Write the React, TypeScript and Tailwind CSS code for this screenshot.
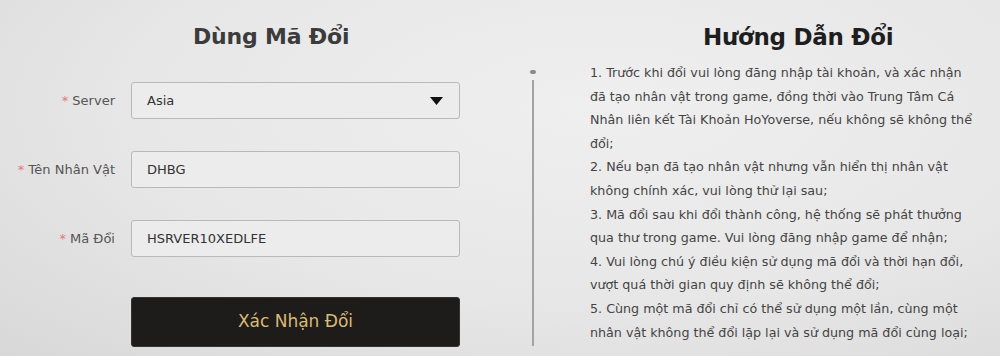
import React from 'react'

const guide: string[][] = [
  [
    '1. Trước khi đổi vui lòng đăng nhập tài khoản, và xác nhận',
    'đã tạo nhân vật trong game, đồng thời vào Trung Tâm Cá',
    'Nhân liên kết Tài Khoản HoYoverse, nếu không sẽ không thể',
    'đổi;'
  ],
  ['2. Nếu bạn đã tạo nhân vật nhưng vẫn hiển thị nhân vật', 'không chính xác, vui lòng thử lại sau;'],
  [
    '3. Mã đổi sau khi đổi thành công, hệ thống sẽ phát thưởng',
    'qua thư trong game. Vui lòng đăng nhập game để nhận;'
  ],
  [
    '4. Vui lòng chú ý điều kiện sử dụng mã đổi và thời hạn đổi,',
    'vượt quá thời gian quy định sẽ không thể đổi;'
  ],
  [
    '5. Cùng một mã đổi chỉ có thể sử dụng một lần, cùng một',
    'nhân vật không thể đổi lặp lại và sử dụng mã đổi cùng loại;'
  ]
]

const Field: React.FC<{ label: string; value: string; select?: boolean }> = ({ label, value, select }) => (
  <div className="flex items-center">
    <div className="w-[115px] text-right text-[13px] text-[#555] whitespace-nowrap">
      <span className="text-[#e07a7a] mr-1">*</span>
      {label}
    </div>
    <div className="ml-4 w-[329px] h-[37px] flex items-center justify-between pl-[15px] pr-4 bg-[#ececec] border border-[#b9b9b9] rounded-[3px] text-[13px] text-[#333]">
      <span>{value}</span>
      {select && (
        <svg width="13" height="8" viewBox="0 0 13 8">
          <path d="M0 0 H13 L6.5 8 Z" fill="#111" />
        </svg>
      )}
    </div>
  </div>
)

export default function App() {
  return (
    <div
      className="w-[1000px] h-[356px] overflow-hidden flex bg-[radial-gradient(ellipse_at_60%_30%,#efefef_0%,#e7e7e7_55%,#d8d8d8_100%)]"
      style={{ fontFamily: '"DejaVu Sans", Verdana, sans-serif' }}
    >
      {/* cột trái: form đổi mã */}
      <div className="w-[531px] shrink-0 flex flex-col">
        <h1 className="mt-[22px] ml-[193px] text-[22px] leading-[30px] font-bold text-[#3b3b3b] tracking-[-0.2px]">
          Dùng Mã Đổi
        </h1>
        <div className="mt-[30px] flex flex-col gap-8">
          <Field label="Server" value="Asia" select />
          <Field label="Tên Nhân Vật" value="DHBG" />
          <Field label="Mã Đổi" value="HSRVER10XEDLFE" />
        </div>
        <button className="mt-10 ml-[131px] w-[329px] h-[50px] bg-[#1d1c1b] border border-[#333] rounded-[3px] text-[17px] text-[#dcb974]">
          Xác Nhận Đổi
        </button>
      </div>

      {/* đường chia */}
      <div className="w-1 shrink-0 flex flex-col items-center pt-[70px]">
        <div className="w-[6px] h-[4px] rounded-full bg-[#8a8a8a]" />
        <div className="mt-[6px] w-[2px] h-[266px] bg-[#a3a3a3]" />
      </div>

      {/* cột phải: hướng dẫn */}
      <div className="flex-1 pl-[55px] pr-4">
        <h2 className="mt-[22px] ml-[113px] text-[23px] leading-[30px] font-bold text-[#1e1e1e] tracking-[-0.3px]">
          Hướng Dẫn Đổi
        </h2>
        <div className="mt-[9px] text-[12.7px] leading-[23.6px] text-[#444] whitespace-nowrap">
          {guide.map((item, i) => (
            <div key={i}>
              {item.map((line, j) => (
                <div key={j}>{line}</div>
              ))}
            </div>
          ))}
        </div>
      </div>
    </div>
  )
}
